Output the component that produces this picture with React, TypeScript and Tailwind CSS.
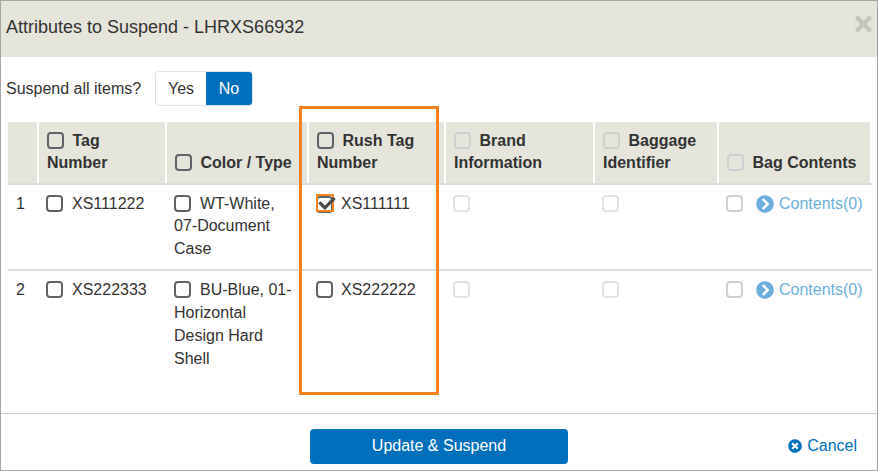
import { FaCheck, FaChevronCircleRight, FaTimes, FaTimesCircle } from 'react-icons/fa';

function Box({ disabled, soft, checked, className = '' }: { disabled?: boolean; soft?: boolean; checked?: boolean; className?: string }) {
  const border = disabled ? 'border-[#e2e2e2]' : soft ? 'border-[#cfcfcf]' : 'border-[#5f6368]';
  return (
    <span className={`relative inline-block w-[17px] h-[17px] align-[-3px] rounded-[4px] border-2 ${checked ? 'top-[1px]' : ''} ${border} ${className}`}>
      {checked && (
        <>
          <span className="absolute left-[-2px] top-[-4px] w-[18px] h-[18px] border-2 border-[#f58220]" />
          <FaCheck className="absolute left-0 top-[-3px] w-[18px] h-[17px] text-[#4a4a4a]" />
        </>
      )}
    </span>
  );
}

function Head({ label, soft, bottom }: { label: string; soft?: boolean; bottom?: boolean }) {
  return (
    <th className={`bg-[#e5e5dc] border-r-2 border-white pt-2 px-2 pb-[8.6px] text-left font-bold leading-[22px] ${bottom ? 'align-bottom' : 'align-top'}`}>
      <Box soft={soft} className="mr-[8.5px]" />
      {label}
    </th>
  );
}

const cell = 'py-2 pl-[7px] pr-3 border-t-2 border-[#dddddd]';

const rows = [
  { n: 1, tag: 'XS111222', type: 'WT-White, 07-Document Case', rush: 'XS111111', checked: true },
  { n: 2, tag: 'XS222333', type: 'BU-Blue, 01-Horizontal Design Hard Shell', rush: 'XS222222', checked: false },
];

export default function App() {
  return (
    <div className="relative w-[878px] h-[471px] flex flex-col bg-white border border-[#a6a6a6] text-[16px] leading-[1.42857] text-[#333] font-['Liberation_Sans',Arial,sans-serif] overflow-hidden">
      <div className="h-[56px] shrink-0 flex items-start justify-between bg-[#e5e5dc] px-[5px]">
        <h1 className="text-[18px] leading-[53px] font-normal">Attributes to Suspend - LHRXS66932</h1>
        <FaTimes className="w-[17px] h-[24px] mt-[11px] text-[#c4c4bc]" />
      </div>

      <div className="flex-1">
        <div className="flex items-center h-[35px] mt-[14px] pl-[5px]">
          <span className="w-[149px] pt-px">Suspend all items?</span>
          <div className="flex h-[35px] rounded-[4px] border border-[#e0e0e0] overflow-hidden">
            <span className="w-[50px] flex items-center justify-center pt-px bg-white">Yes</span>
            <span className="w-[46px] flex items-center justify-center pt-px bg-[#0070bc] text-white">No</span>
          </div>
        </div>

        <table className="table-fixed border-separate border-spacing-0 w-[864px] ml-[7px] mt-[16px]">
          <colgroup>
            <col className="w-[31px]" />
            <col className="w-[128px]" />
            <col className="w-[142px]" />
            <col className="w-[137px]" />
            <col className="w-[149px]" />
            <col className="w-[124px]" />
            <col className="w-[153px]" />
          </colgroup>
          <thead>
            <tr>
              <th className="bg-[#e5e5dc] border-r-2 border-white" />
              <Head label="Tag Number" />
              <Head label="Color / Type" bottom />
              <Head label="Rush Tag Number" />
              <Head label="Brand Information" soft />
              <Head label="Baggage Identifier" soft />
              <Head label="Bag Contents" soft bottom />
            </tr>
          </thead>
          <tbody>
            {rows.map(r => (
              <tr key={r.n} className="align-top">
                <td className="p-2 border-t-2 border-[#dddddd]">{r.n}</td>
                <td className={cell}>
                  <Box className="mr-[9px]" />
                  {r.tag}
                </td>
                <td className={cell}>
                  <Box className="mr-[9px]" />
                  {r.type}
                </td>
                <td className={cell}>
                  <Box checked={r.checked} className="mr-[8px]" />
                  {r.rush}
                </td>
                <td className={cell}>
                  <Box disabled />
                </td>
                <td className={cell}>
                  <Box disabled />
                </td>
                <td className={`${cell} whitespace-nowrap`}>
                  <Box soft className="mr-[13px]" />
                  <a className="text-[#6cafdc]">
                    <FaChevronCircleRight className="inline-block w-[18px] h-[18px] mr-[5px] align-[-4px]" />
                    Contents(0)
                  </a>
                </td>
              </tr>
            ))}
          </tbody>
        </table>
      </div>

      <div className="h-[57px] shrink-0 border-t border-[#cccccc] grid grid-cols-[1fr_258px_1fr] items-start pt-[15px]">
        <span />
        <button className="h-[35px] rounded-[4px] bg-[#0070bc] text-white">Update &amp; Suspend</button>
        <a className="justify-self-end flex items-center gap-[5px] mt-[6px] mr-[20px] text-[#0070bc]">
          <FaTimesCircle className="w-[14px] h-[14px]" />
          Cancel
        </a>
      </div>

      <div className="absolute left-[298px] top-[105px] w-[140px] h-[289px] border-[3px] border-[#f58220]" />
    </div>
  );
}
